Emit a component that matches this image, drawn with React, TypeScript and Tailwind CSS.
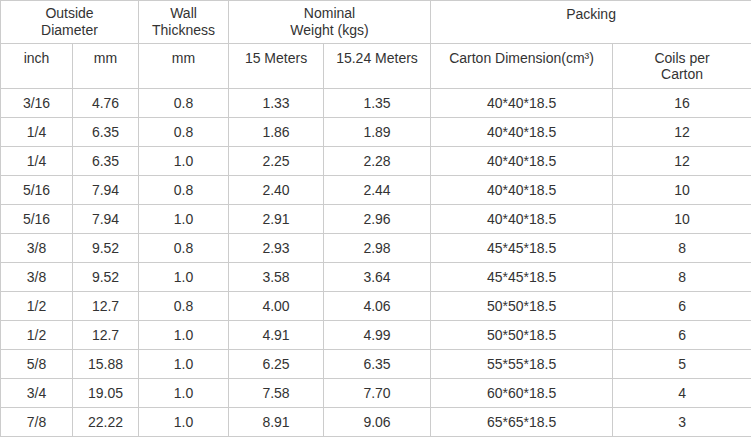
import React from 'react'

const rows: string[][] = [
  ['3/16', '4.76', '0.8', '1.33', '1.35', '40*40*18.5', '16'],
  ['1/4', '6.35', '0.8', '1.86', '1.89', '40*40*18.5', '12'],
  ['1/4', '6.35', '1.0', '2.25', '2.28', '40*40*18.5', '12'],
  ['5/16', '7.94', '0.8', '2.40', '2.44', '40*40*18.5', '10'],
  ['5/16', '7.94', '1.0', '2.91', '2.96', '40*40*18.5', '10'],
  ['3/8', '9.52', '0.8', '2.93', '2.98', '45*45*18.5', '8'],
  ['3/8', '9.52', '1.0', '3.58', '3.64', '45*45*18.5', '8'],
  ['1/2', '12.7', '0.8', '4.00', '4.06', '50*50*18.5', '6'],
  ['1/2', '12.7', '1.0', '4.91', '4.99', '50*50*18.5', '6'],
  ['5/8', '15.88', '1.0', '6.25', '6.35', '55*55*18.5', '5'],
  ['3/4', '19.05', '1.0', '7.58', '7.70', '60*60*18.5', '4'],
  ['7/8', '22.22', '1.0', '8.91', '9.06', '65*65*18.5', '3'],
]

const th = 'border border-[#cccccc] align-top text-center font-normal px-1'

export default function App() {
  return (
    <div className="bg-white w-[751px] h-[437px] overflow-hidden">
      <table
        className="table-fixed border-collapse w-[751px] text-[14px] leading-[16px] text-[#333333]"
        style={{ fontFamily: '"Liberation Sans", Arial, sans-serif' }}
      >
        <colgroup>
          <col className="w-[72px]" />
          <col className="w-[66px]" />
          <col className="w-[90px]" />
          <col className="w-[95px]" />
          <col className="w-[107px]" />
          <col className="w-[182px]" />
          <col className="w-[139px]" />
        </colgroup>
        <thead>
          <tr className="h-[43px]">
            <th colSpan={2} className={`${th} pt-[4px] leading-[17px]`}>
              Outside
              <br />
              Diameter
            </th>
            <th className={`${th} pt-[4px] leading-[17px]`}>
              Wall
              <br />
              Thickness
            </th>
            <th colSpan={2} className={`${th} pt-[4px] leading-[17px]`}>
              Nominal
              <br />
              Weight (kgs)
            </th>
            <th colSpan={2} className={`${th} pt-[5px]`}>
              Packing
            </th>
          </tr>
          <tr className="h-[45px]">
            <th className={`${th} pt-[6px]`}>inch</th>
            <th className={`${th} pt-[6px]`}>mm</th>
            <th className={`${th} pt-[6px]`}>mm</th>
            <th className={`${th} pt-[6px]`}>15 Meters</th>
            <th className={`${th} pt-[6px]`}>15.24 Meters</th>
            <th className={`${th} pt-[6px]`}>Carton Dimension(cm³)</th>
            <th className={`${th} pt-[6px]`}>
              Coils per
              <br />
              Carton
            </th>
          </tr>
        </thead>
        <tbody>
          {rows.map((r, i) => (
            <tr key={i} className="h-[29px]">
              {r.map((c, j) => (
                <td key={j} className="border border-[#cccccc] text-center align-middle p-0">
                  {c}
                </td>
              ))}
            </tr>
          ))}
        </tbody>
      </table>
    </div>
  )
}
